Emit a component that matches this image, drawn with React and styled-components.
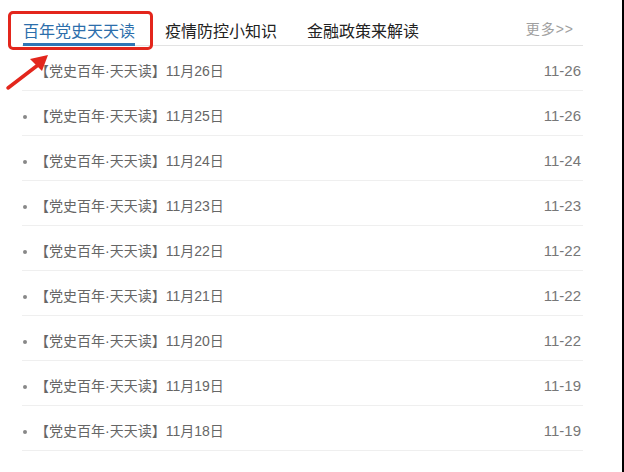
import React from "react";
import styled, { createGlobalStyle } from "styled-components";

const TABS = ["百年党史天天读", "疫情防控小知识", "金融政策来解读"];
const ITEMS = [
  { day: 26, date: "11-26" },
  { day: 25, date: "11-26" },
  { day: 24, date: "11-24" },
  { day: 23, date: "11-23" },
  { day: 22, date: "11-22" },
  { day: 21, date: "11-22" },
  { day: 20, date: "11-22" },
  { day: 19, date: "11-19" },
  { day: 18, date: "11-19" },
];

const GlobalStyle = createGlobalStyle`
  html, body {
    margin: 0;
    padding: 0;
    background: #fff;
  }
  body {
    font-family: "Liberation Sans", "Noto Sans CJK SC", sans-serif;
  }
`;

export default function App() {
  return (
    <>
      <GlobalStyle />
      <Page>
        <Panel>
          <TabBar>
            <TabList>
              {TABS.map((t, i) => (
                <Tab key={t} active={i === 0}>
                  {t}
                </Tab>
              ))}
            </TabList>
            <More>更多&gt;&gt;</More>
          </TabBar>
          <List>
            {ITEMS.map((item, i) => (
              <Row key={item.day}>
                <Title bullet={i > 0}>【党史百年·天天读】11月{item.day}日</Title>
                <DateText>{item.date}</DateText>
              </Row>
            ))}
          </List>
        </Panel>
        <Highlight />
        <Arrow width="60" height="45" viewBox="0 0 60 45">
          <line x1="8" y1="38" x2="38" y2="15" stroke="#e3261c" strokeWidth="3.5" strokeLinecap="round" />
          <polygon points="48,5 30,9 42,21" fill="#e3261c" />
        </Arrow>
      </Page>
    </>
  );
}

const Page = styled.div`
  position: relative;
  width: 624px;
  height: 472px;
  box-sizing: border-box;
  border-right: 2px solid #000;
  overflow: hidden;
`;

const Panel = styled.div`
  width: 561px;
  margin-left: 22px;
`;

const TabBar = styled.div`
  display: flex;
  align-items: flex-end;
  justify-content: space-between;
  height: 45px;
  border-bottom: 1px solid #e3e3e3;
`;

const TabList = styled.div`
  display: flex;
  gap: 30px;
  padding-left: 1px;
`;

const Tab = styled.div`
  font-family: "Noto Sans CJK SC", sans-serif;
  font-size: 16px;
  line-height: 24px;
  padding-bottom: 1px;
  margin-bottom: -1px;
  color: ${(p) => (p.active ? "#2c6eab" : "#222")};
  border-bottom: 3px solid ${(p) => (p.active ? "#2f76b6" : "transparent")};
`;

const More = styled.div`
  font-size: 14px;
  line-height: 24px;
  color: #a0a0a0;
  margin-right: 9px;
  padding-bottom: 4px;
  letter-spacing: 1px;
`;

const List = styled.ul`
  list-style: none;
  margin: 0;
  padding: 0;
`;

const Row = styled.li`
  display: flex;
  align-items: center;
  justify-content: space-between;
  box-sizing: border-box;
  height: 45px;
  padding: 6px 2px 0 0;
  border-bottom: 1px solid #efefef;
  color: #666;
`;

const Title = styled.span`
  position: relative;
  font-size: 14px;
  line-height: 24px;
  padding-left: 13px;

  &::before {
    content: "";
    display: ${(p) => (p.bullet ? "block" : "none")};
    position: absolute;
    left: 1px;
    top: 11px;
    width: 4px;
    height: 4px;
    border-radius: 50%;
    background: #888;
  }
`;

const DateText = styled.span`
  font-size: 15px;
  line-height: 24px;
  color: #777;
`;

const Highlight = styled.div`
  position: absolute;
  left: 8px;
  top: 11px;
  width: 145px;
  height: 39px;
  box-sizing: border-box;
  border: 3px solid #e3261c;
  border-radius: 5px;
`;

const Arrow = styled.svg`
  position: absolute;
  left: 0;
  top: 50px;
`;
